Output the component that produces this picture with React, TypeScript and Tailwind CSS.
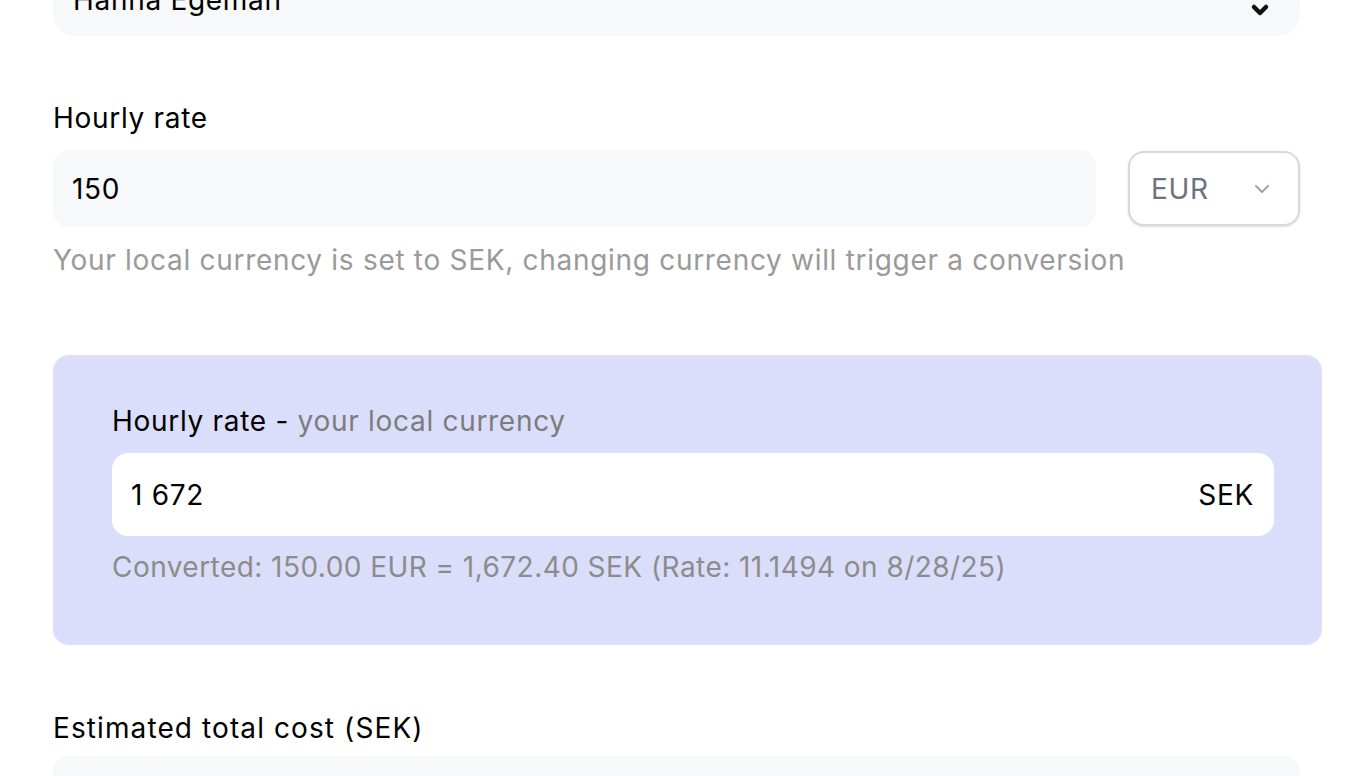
import React from "react";

function Chevron({ className }: { className?: string }) {
  return (
    <svg viewBox="0 0 24 24" className={className} fill="none" stroke="currentColor" strokeLinecap="round" strokeLinejoin="round">
      <path d="M6 9l6 6 6-6" />
    </svg>
  );
}

export default function App() {
  return (
    <div className="min-h-screen w-full bg-white overflow-hidden" style={{ fontFamily: '"Inter", "Liberation Sans", sans-serif' }}>
      <div className="pl-[53px] w-[1322px] text-[28px] tracking-[0.7px] text-black">
        {/* Top select (clipped) */}
        <div className="mt-[-41px] h-[77px] w-[1247px] rounded-[22px] bg-[#f7f8fa] flex items-center px-[20px] justify-between">
          <span className="mt-[4px]">Hanna Egeman</span>
          <svg viewBox="0 0 24 24" className="w-[24px] h-[24px] mr-[8px] mt-[25px] text-[#111]" fill="none" stroke="currentColor" strokeWidth="4.5" strokeLinecap="round" strokeLinejoin="round">
            <path d="M6 9l6 6 6-6" />
          </svg>
        </div>

        {/* Hourly rate */}
        <div className="mt-[64px] h-[36px] leading-[36px] mb-[14px]">Hourly rate</div>
        <div className="flex gap-[32px] w-[1247px]">
          <div className="flex-1 h-[77px] rounded-[16px] bg-[#f7f8fa] flex items-center px-[19px]">150</div>
          <div className="w-[172px] h-[75px] mt-[1px] rounded-[16px] border-2 border-[#d7d9dd] bg-white shadow-sm flex items-center justify-between pl-[21px] pr-[24px] text-[#6b7280]">
            <span>EUR</span>
            <Chevron className="w-[24px] h-[24px] text-[#9ca3af] stroke-2" />
          </div>
        </div>
        <div className="mt-[15px] h-[36px] leading-[36px] text-[#9a9a9a]">
          Your local currency is set to SEK, changing currency will trigger a conversion
        </div>

        {/* Local currency card */}
        <div className="mt-[77px] w-[1269px] rounded-[16px] bg-[#dadefa] pt-[48px] pb-[60px] pl-[59px] pr-[48px]">
          <div className="h-[36px] leading-[36px] mb-[14px]">
            Hourly rate <span className="text-black">-</span> <span className="text-[#7c7c7c]">your local currency</span>
          </div>
          <div className="h-[83px] rounded-[16px] bg-white flex items-center justify-between pl-[19px] pr-[20px]">
            <span>1 672</span>
            <span>SEK</span>
          </div>
          <div className="mt-[13px] h-[36px] leading-[36px] tracking-[0.45px] text-[#8c8c8c]">
            Converted: 150.00 EUR = 1,672.40 SEK (Rate: 11.1494 on 8/28/25)
          </div>
        </div>

        {/* Estimated total cost */}
        <div className="mt-[65px] h-[36px] leading-[36px] mb-[10px] tracking-[1.1px]">Estimated total cost (SEK)</div>
        <div className="h-[77px] w-[1247px] rounded-[16px] bg-[#f7f8fa]"></div>
      </div>
    </div>
  );
}
